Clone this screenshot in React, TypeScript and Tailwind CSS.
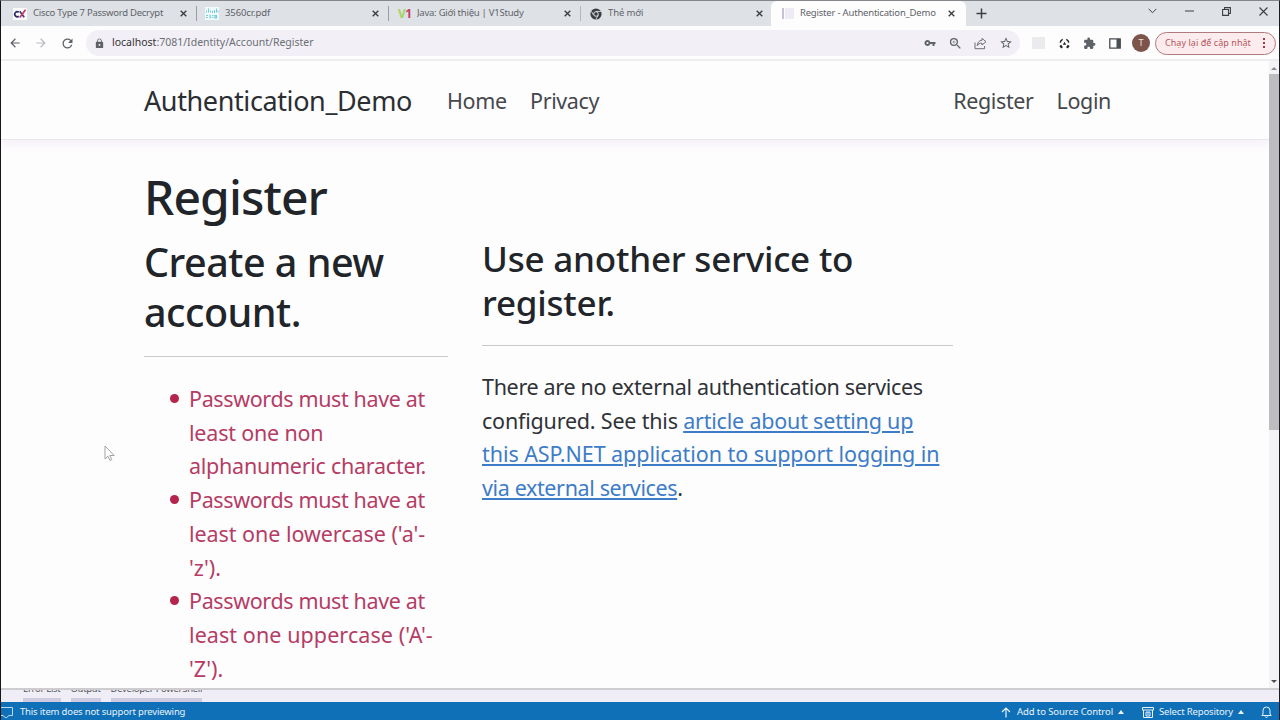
import React from 'react';
import {
  MdArrowBack, MdArrowForward, MdExtension, MdLock, MdRefresh, MdStarBorder, MdVpnKey, MdZoomIn,
} from 'react-icons/md';

const CloseIcon = () => (
  <svg width="7" height="7" viewBox="0 0 7 7" className="shrink-0" stroke="#3c4043" strokeWidth="1.4">
    <path d="M.7.7l5.6 5.6M6.3.7L.7 6.3" />
  </svg>
);

const CxIcon = () => (
  <svg width="14" height="12" viewBox="0 0 14 12" className="shrink-0" fill="none" strokeWidth="1.7">
    <rect width="14" height="12" fill="#fafafa" />
    <path d="M5.8 4.2A2.5 2.5 0 1 0 5.8 8.2" stroke="#2d2a6e" />
    <path d="M6.8 3.2l4.4 6" stroke="#3f3b7d" />
    <path d="M12.5 1.8L6.8 9.6" stroke="#c8375f" />
  </svg>
);

const CiscoIcon = () => (
  <svg width="14" height="13" viewBox="0 0 14 13" className="shrink-0" fill="none" stroke="#6fcdd9">
    <rect width="14" height="13" fill="#f2fbfc" stroke="none" />
    <path d="M1.5 3.5v2M3.5 1.5v4M5.5 3.5v2M7.5 4v2M9.5 3v3M11.5 1.5v4M13 3.5v2" />
    <path d="M1 8.5h2M1 10.5h2M5 7.5v4M7 8.5h1.5M7 10.5h1.5M10 8.5h1.5v2.5H10z" strokeWidth="1.2" />
  </svg>
);

const ChromeIcon = () => (
  <svg width="12" height="12" viewBox="0 0 12 12" className="shrink-0">
    <circle cx="6" cy="6" r="5.6" fill="#3a3d42" />
    <circle cx="6" cy="6" r="2.3" fill="#3a3d42" stroke="#dee1e6" strokeWidth="1" />
    <path d="M6 3.4h5M3.7 7.2L1.4 3.3M8.2 7.4L5.8 11.4" stroke="#dee1e6" strokeWidth=".9" />
  </svg>
);

const ShareIcon = () => (
  <svg width="13" height="13" viewBox="0 0 13 13" fill="none" stroke="#6b6e74" strokeWidth="1">
    <path d="M1 5.5v6.2h9.6V9" />
    <path d="M8 1.4l4 3.3-4 3.3V6.2C5.6 6.1 4.2 7 3.2 8.7 3.5 5.7 5 3.5 8 3.2z" strokeLinejoin="round" />
  </svg>
);

const Triad = () => (
  <svg width="11" height="11" viewBox="0 0 11 11" fill="none" stroke="#202124" strokeWidth="2">
    <path d="M3.7 1.3A4.6 4.6 0 0 0 1.2 4.6M7.3 1.3A4.6 4.6 0 0 1 9.8 4.6" strokeWidth="1.5" />
    <path d="M1.3 7.4l1.7 2.4M9.7 7.4L8 9.800" strokeWidth="2.2" />
    <path d="M5.5 3.800l1.700 3H3.800z" fill="#202124" stroke="none" />
  </svg>
);

const Tab = ({ icon, title, className, track }: {
  icon: React.ReactNode; title: string; className: string; track: string;
}) => (
  <div className={`flex items-center h-full ${className}`}>
    {icon}
    <span className={`ml-[6px] flex-1 overflow-hidden whitespace-nowrap text-[9.5px] text-[#5f6368] ${track}`}>{title}</span>
    <CloseIcon />
  </div>
);

const TabStrip = () => (
  <div className="flex h-[25px] shrink-0 items-center bg-[#dee1e6]">
    <Tab icon={<CxIcon />} title="Cisco Type 7 Password Decrypt" track="tracking-[-0.26px]" className="w-[195px] pl-[12px] pr-[9px]" />
    <div className="h-[15px] w-px bg-[#9a9da3]" />
    <Tab icon={<CiscoIcon />} title="3560cr.pdf" track="tracking-[-0.1px]" className="w-[191px] pl-[8px] pr-[9px]" />
    <div className="h-[15px] w-px bg-[#9a9da3]" />
    <Tab
      icon={<span className="w-[13px] shrink-0 text-[12px] font-bold leading-none tracking-[-0.5px] text-[#a5d35a]">V<span className="text-[#c43f61]">1</span></span>}
      title="Java: Giới thiệu | V1Study" track="tracking-[-0.24px]" className="w-[191px] pl-[9px] pr-[9px]" />
    <div className="h-[15px] w-px bg-[#b4b7bc]" />
    <Tab icon={<ChromeIcon />} title="Thẻ mới" track="tracking-[-0.1px]" className="w-[190px] pl-[9px] pr-[8px]" />
    <div className="h-full w-[195px] rounded-t-[6px] bg-[#fdfdfe]">
      <Tab
        icon={<span className="flex h-[11px] w-[12px] shrink-0 gap-px"><i className="w-[2px] bg-[#c5c3d3]" /><i className="flex-1 bg-[#eeebf4]" /></span>}
        title="Register - Authentication_Demo" track="tracking-[-0.2px]" className="pl-[11px] pr-[11px]" />
    </div>
    <svg width="11" height="11" viewBox="0 0 11 11" className="ml-[10px]" stroke="#3c4043" strokeWidth="1.5">
      <path d="M5.5 .5v10M.5 5.5h10" />
    </svg>
    <div className="ml-auto flex items-center pb-[5px] pr-[11px]">
      <svg width="9" height="6" viewBox="0 0 9 6" fill="none" stroke="#3c4043"><path d="M.7.9l3.8 3.8L8.300.9" /></svg>
      <svg width="9" height="2" viewBox="0 0 9 2" className="ml-[28px]"><path d="M0 1h9" stroke="#3c4043" /></svg>
      <svg width="9" height="9" viewBox="0 0 9 9" className="ml-[28px]" fill="none" stroke="#3c4043" strokeWidth="1.1">
        <path d="M.6 2.5h5.9v5.9H.6zM2.5 2.5V.6h5.900v5.900H6.500" />
      </svg>
      <svg width="9" height="9" viewBox="0 0 9 9" className="ml-[28px]" stroke="#3c4043" strokeWidth="1.1"><path d="M.5.5l8 8M8.5.5l-8 8" /></svg>
    </div>
  </div>
);

const Toolbar = () => (
  <div className="flex h-[35px] shrink-0 items-center border-b-2 border-[#f0edf1] bg-[#fdfdfe] pt-px text-[#5f6368]">
    <MdArrowBack size={14} className="ml-[7px]" />
    <MdArrowForward size={14} className="ml-[12px] text-[#b9bbbf]" />
    <MdRefresh size={15} className="ml-[12px]" />
    <div className="ml-[11px] flex h-[26px] w-[934px] items-center rounded-full bg-[#f2f0f6] pl-[8px] pr-[7px]">
      <MdLock size={11} />
      <span className="ml-[7px] text-[10.5px] text-[#6b6e74]"><span className="text-[#333]">localhost</span>:7081/Identity/Account/Register</span>
      <div className="ml-auto flex items-center">
        <MdVpnKey size={12} />
        <MdZoomIn size={15} className="ml-[12px]" />
        <span className="ml-[11px]"><ShareIcon /></span>
        <MdStarBorder size={14} className="ml-[12px]" />
      </div>
    </div>
    <div className="ml-[12px] h-[12px] w-[13px] bg-[#ebebed]" />
    <span className="ml-[14px]"><Triad /></span>
    <MdExtension size={13} className="ml-[13px]" />
    <svg width="12" height="11" viewBox="0 0 12 11" className="ml-[13px]">
      <path d="M.8.8h10.400v9.400H.8z" fill="none" stroke="#4a4d52" strokeWidth="1.3" />
      <path d="M7.500 1h4v9h-4z" fill="#4a4d52" />
    </svg>
    <div className="ml-[11px] flex size-[18px] items-center justify-center rounded-full bg-[#7d5449] text-[9px] text-[#f3e4df]">T</div>
    <div className="ml-[5px] flex h-[23px] w-[121px] shrink-0 items-center rounded-full border border-[#b07b7c] bg-[#fdecee] pl-[9px] text-[9px] text-[#b5545b]">
      <span className="whitespace-nowrap tracking-[0.05px]">Chạy lại để cập nhật</span>
      <span className="ml-auto mr-[10px] flex flex-col gap-[2px]">
        <i className="size-[2px] bg-[#a8393f]" /><i className="size-[2px] bg-[#a8393f]" /><i className="size-[2px] bg-[#a8393f]" />
      </span>
    </div>
  </div>
);

interface Line {
  text: string;
  track: string;
}

const errors: Line[][] = [
  [
    { text: 'Passwords must have at', track: 'tracking-[-0.37px]' },
    { text: 'least one non', track: 'tracking-[-0.2px]' },
    { text: 'alphanumeric character.', track: 'tracking-[-0.26px]' },
  ],
  [
    { text: 'Passwords must have at', track: 'tracking-[-0.37px]' },
    { text: "least one lowercase ('a'-", track: 'tracking-[-0.05px]' },
    { text: "'z').", track: 'tracking-normal' },
  ],
  [
    { text: 'Passwords must have at', track: 'tracking-[-0.37px]' },
    { text: "least one uppercase ('A'-", track: 'tracking-[0.08px]' },
    { text: "'Z').", track: 'tracking-normal' },
  ],
];

const RegisterPage = () => (
  <div className="relative min-w-0 flex-1 overflow-hidden text-[#212529]">
    <nav className="flex h-[79px] items-center whitespace-nowrap border-b border-[#ece7ef] pl-[143px] pr-[158px] pt-[3px] text-[21.5px] tracking-[-0.38px] text-[#46484c] shadow-[0_4px_10px_rgba(150,60,170,0.08)]">
      <span className="w-[303px] text-[27px] tracking-[-0.39px] text-[#2b2e32]">Authentication_Demo</span>
      <span className="w-[83px]">Home</span>
      <span>Privacy</span>
      <span className="ml-auto">Register</span>
      <span className="ml-[23px]">Login</span>
    </nav>
    <main className="pl-[143px] pt-[28px]">
      <h1 className="h-[69px] text-[48px] font-medium leading-[58px] tracking-[-0.9px]">Register</h1>
      <div className="flex gap-[34px]">
        <section className="w-[304px] shrink-0">
          <h2 className="whitespace-nowrap text-[39.5px] font-medium leading-[50px] tracking-[-0.5px]">Create a new<br />account.</h2>
          <hr className="mt-[19px] border-[#c8c9cb]" />
          <ul className="mt-[25px] pl-[45px] text-[21.5px] leading-[33.7px] text-[#b53c64]">
            {errors.map((lines, i) => (
              <li key={i} className="relative">
                <i className="absolute -left-[19px] top-[12px] size-[9px] rounded-full bg-[#b4244c]" />
                {lines.map(l => <div key={l.text} className={`whitespace-nowrap ${l.track}`}>{l.text}</div>)}
              </li>
            ))}
          </ul>
        </section>
        <section className="w-[471px] shrink-0">
          <h3 className="whitespace-nowrap text-[35px] font-medium leading-[44px] tracking-[-0.2px]">Use another service to<br />register.</h3>
          <hr className="mt-[20px] border-[#c8c9cb]" />
          <p className="mt-[24px] whitespace-nowrap text-[21.5px] leading-[33.7px] tracking-[-0.2px] text-[#2f3236]">
            <span className="tracking-[-0.32px]">There are no external authentication services</span><br />
            configured. See this <a className="text-[#3d7cc6] underline decoration-2 underline-offset-2">article about setting up<br />
            <span className="tracking-[-0.06px]">this ASP.NET application to support logging in</span><br />
            <span className="tracking-[-0.37px]">via external services</span></a>.
          </p>
        </section>
      </div>
    </main>
    {/* mouse cursor */}
    <svg width="12" height="18" viewBox="0 0 12 18" className="absolute left-[103px] top-[384px]" fill="#fff" stroke="#a3a1a8">
      <path d="M1 1v13l3-2.800 2 4.300 1.800-.9-2-4.100h4.400z" />
    </svg>
  </div>
);

const Scrollbar = () => (
  <div className="flex w-[10px] shrink-0 flex-col items-center bg-[#f3f2f5]">
    <svg width="6" height="13" viewBox="0 0 6 13" className="shrink-0"><path d="M0 9l3-3 3 3z" fill="#8b8b8f" /></svg>
    <div className="h-[356px] w-full bg-[#bdbcc0]" />
    <svg width="6" height="4" viewBox="0 0 6 4" className="mb-[4px] mt-auto"><path d="M0 0h6L3 3z" fill="#4c4c50" /></svg>
  </div>
);

const StatusBar = () => (
  <div className="flex h-[18px] shrink-0 items-center bg-[#0f70b7] pt-[2px] text-[9.5px] tracking-[-0.16px] text-[#e8f3fb]">
    <svg width="13" height="13" viewBox="0 0 13 13" fill="none" stroke="#b9dbf2"><path d="M0 1.5h11.5v8H8l-3 2.5-3-2.5H0" /></svg>
    <span className="ml-[6px]">This item does not support previewing</span>
    <svg width="10" height="11" viewBox="0 0 10 11" className="ml-auto" fill="none" stroke="#e8f3fb" strokeWidth="1.2"><path d="M5 10.5V1M1 5l4-4 4 4" /></svg>
    <span className="ml-[6px] tracking-[-0.08px]">Add to Source Control</span>
    <svg width="6" height="4" viewBox="0 0 6 4" className="ml-[5px]"><path d="M0 4l3-4 3 4z" fill="#e8f3fb" /></svg>
    <svg width="12" height="11" viewBox="0 0 12 11" className="ml-[18px]" fill="none" stroke="#e8f3fb">
      <path d="M.5.5h11v2.500H.5zM1.500 3v7.500h9V3M4 5h4v4H4zM6 5v3" />
    </svg>
    <span className="ml-[5px]">Select Repository</span>
    <svg width="6" height="4" viewBox="0 0 6 4" className="ml-[5px]"><path d="M0 4l3-4 3 4z" fill="#e8f3fb" /></svg>
    <svg width="11" height="12" viewBox="0 0 11 12" className="ml-[17px] mr-[7px]" fill="none" stroke="#e8f3fb">
      <path d="M.8 9.500h9.400L9 8V4.500a3.500 3.500 0 0 0-7 0V8zM4.200 10.500a1.400 1.400 0 0 0 2.600 0" />
    </svg>
  </div>
);

export default function App() {
  return (
    <div className="flex h-[720px] w-[1280px] flex-col overflow-hidden border-l border-r border-t border-l-[#151518] border-r-[#1c1c1e] border-t-[#85868b] bg-[#fdfdfe] font-['Noto_Sans',sans-serif]">
      <TabStrip />
      <Toolbar />
      <div className="flex h-[627px] shrink-0">
        <RegisterPage />
        <Scrollbar />
      </div>
      {/* IDE panel tabs showing under the browser window */}
      <div className="flex h-[14px] shrink-0 gap-[10px] overflow-hidden border-t-2 border-[#cfcccf] bg-[#efedf5] pl-[22px] text-[9.5px] leading-[12px] tracking-[-0.3px] text-[#55555c]">
        {['Error List', 'Output', 'Developer PowerShell'].map(t => (
          <div key={t} className="flex h-[12px] flex-col justify-between overflow-hidden whitespace-nowrap">
            <span className="-mt-[7px]">{t}</span>
            <div className="h-[4px] shrink-0 bg-[#cfcbe0]" />
          </div>
        ))}
      </div>
      <StatusBar />
    </div>
  );
}
